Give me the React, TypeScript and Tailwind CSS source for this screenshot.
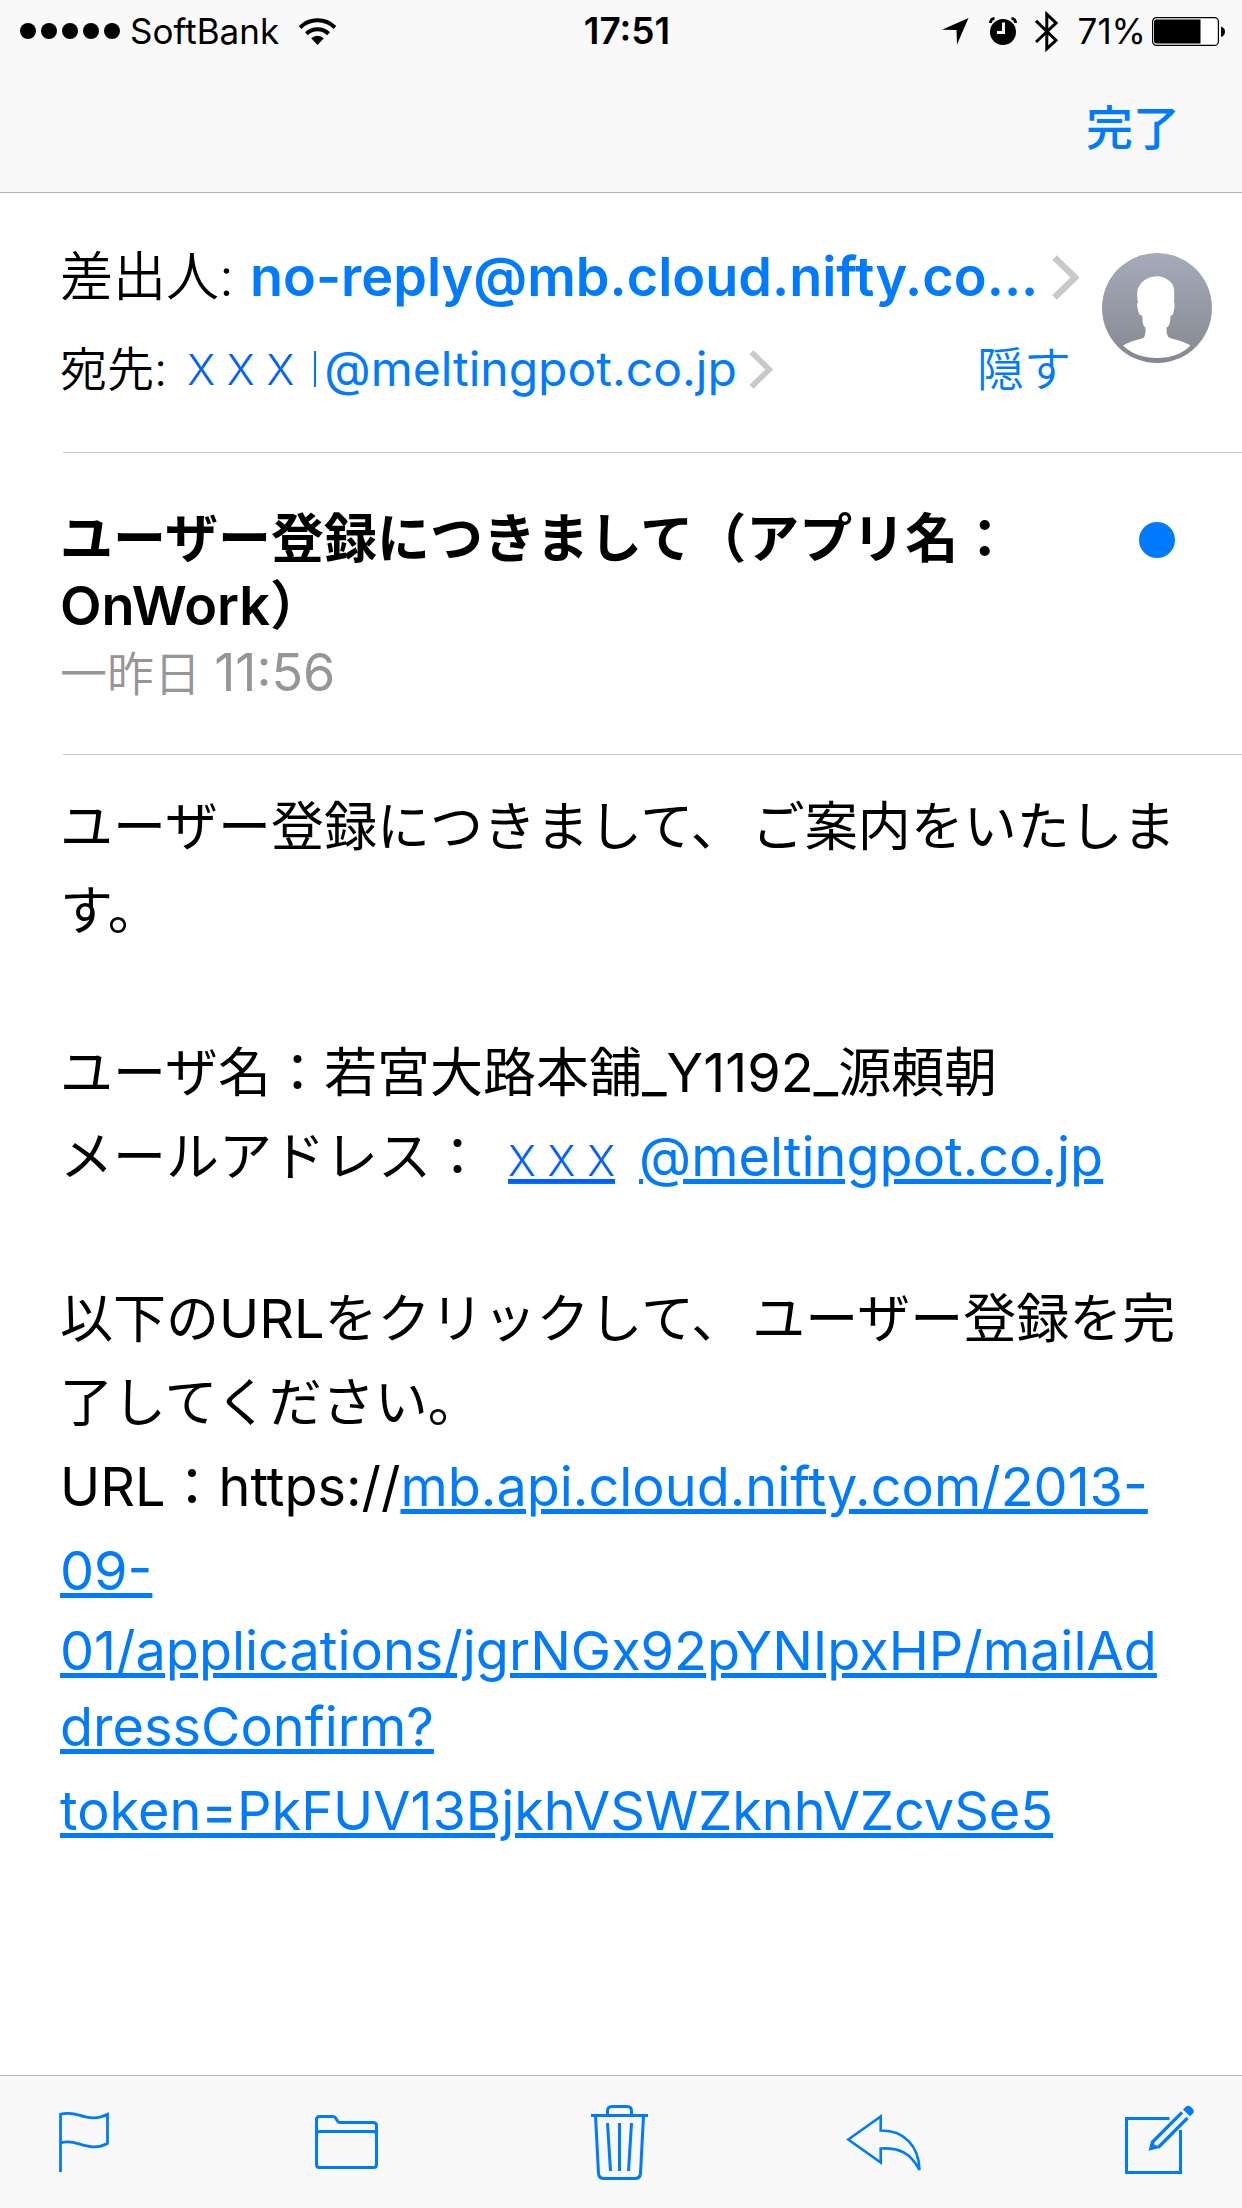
import type { ReactNode } from "react";

// Latin runs are set slightly larger than the Japanese text around them
function Latin({ children }: { children: ReactNode }) {
  return <span className="text-[54px] leading-none">{children}</span>;
}

// Full-width comma with a little extra room after it
function Comma() {
  return <span className="mr-2">、</span>;
}

function WifiIcon() {
  return (
    <svg width="37" height="27" viewBox="0 0 37 27" fill="none" stroke="#000" strokeWidth="4">
      <path d="M1 9.5A25 25 0 0 1 36 9.5" />
      <path d="M7.4 15.8A16 16 0 0 1 29.6 15.8" />
      <path d="M18.5 27L12.2 20.3A9 9 0 0 1 24.8 20.3Z" fill="#000" stroke="none" />
    </svg>
  );
}

function LocationIcon() {
  return (
    <svg width="27" height="27" viewBox="0 0 27 27">
      <path d="M0 11.7L26.5 0L15 26.5L14.5 12Z" />
    </svg>
  );
}

function AlarmIcon() {
  return (
    <svg width="28" height="28" viewBox="0 0 28 28" fill="none">
      <circle cx="14" cy="15" r="13" fill="#000" />
      <path d="M1.5 6C1.5 3.5 3 1.5 5.5 1.5M26.5 6C26.5 3.5 25 1.5 22.5 1.5" stroke="#000" strokeWidth="3" />
      <path d="M14.5 5.5V15.5H8" stroke="#f9f9f9" strokeWidth="3" />
    </svg>
  );
}

function BluetoothIcon() {
  return (
    <svg width="23" height="41" viewBox="0 0 23 41" fill="none" stroke="#000" strokeWidth="3">
      <path d="M1 9.8L21 29.3L11.8 37.8V3.2L21 12L1 31" />
    </svg>
  );
}

function BatteryIcon() {
  return (
    <svg width="74" height="29" viewBox="0 0 74 29">
      <rect x="0.6" y="0.6" width="65.8" height="27.8" rx="4" fill="#fff" stroke="#000" strokeWidth="1.2" />
      <path d="M4.5 2.5H48.5V26.5H4.5A2.5 2.5 0 0 1 2 24V5A2.5 2.5 0 0 1 4.5 2.5Z" />
      <path d="M69 9.5Q73 11 73 14.7Q73 18.5 69 20Z" />
    </svg>
  );
}

function Chevron({ className }: { className: string }) {
  return (
    <svg className={className} viewBox="0 0 27 45" fill="none" stroke="#c9c9c9" strokeWidth="6.5">
      <path d="M2.5 2.5L23 22.5L2.5 42.5" />
    </svg>
  );
}

function Avatar() {
  return (
    <svg width="110" height="110" viewBox="0 0 110 110" className="block">
      <defs>
        <linearGradient id="avatar" x1="0" y1="0" x2="0" y2="1">
          <stop offset="0" stopColor="#a5abb9" />
          <stop offset="1" stopColor="#848891" />
        </linearGradient>
      </defs>
      <circle cx="55" cy="55" r="55" fill="url(#avatar)" />
      <path
        d="M55 23.3C61 23.3 65 26 68.5 29C72 32 73 38 72 49.5C73.5 50 72 58 71 61C70.5 62.5 69.5 62.5 68.5 62.5L68 69C67.5 71.5 66.5 74 64.5 74.5C64.5 79 65 83 67 84.5C71 86.5 82 88 88.5 92.5C80.5 101 68 105 55 105C42 105 29.5 101 21 92.5C28 88 38 86.5 42 84.5C44 80 43.5 78 43.5 74.5C42 74 41 71.5 40.7 69L40.3 62.5C38.5 62.5 37.6 62 37 60.5C36 57 34 50 36 49.5C34.5 40 35 36 38 32C40 28 47 23.3 55 23.3Z"
        fill="#fff"
      />
    </svg>
  );
}

function FlagIcon() {
  return (
    <svg width="50" height="60" viewBox="0 0 50 60" fill="none" stroke="currentColor" strokeWidth="2.8">
      <path d="M1.5 60V2.3C8 0.5 14 1.4 20 3.2C29 6 38 8 48.5 2.3V31.5C38 37 29 34.7 20 31.9C14 30 8 28.7 1.5 31" />
    </svg>
  );
}

function FolderIcon() {
  return (
    <svg width="86" height="54" viewBox="-8 0 86 54" fill="none" stroke="currentColor" strokeWidth="3">
      <path d="M1.5 49.5V4.5Q1.5 1.5 4.5 1.5H18Q20 1.5 21 3.5L22.5 6Q23.5 7.5 25 7.5H58Q61.5 7.5 61.5 11V49.5Q61.5 52.5 58.5 52.5H4.5Q1.5 52.5 1.5 49.5Z" />
      <path d="M1.5 19.5Q1.5 16.5 4.5 16.5H58.5Q61.5 16.5 61.5 19.5" />
    </svg>
  );
}

function TrashIcon() {
  return (
    <svg width="57" height="75" viewBox="0 0 57 75" fill="none" stroke="currentColor" strokeWidth="3">
      <path d="M0 10.5H57M16.5 10.5V6Q16.5 1.5 21 1.5H36Q40.5 1.5 40.5 6V10.5" />
      <path d="M4.5 10.5L7.5 68.5Q8 73.5 13 73.5H44Q49 73.5 49.5 68.5L52.5 10.5" />
      <path d="M16.5 18L19.5 66M28.5 18V66M40.5 18L37.5 66" />
    </svg>
  );
}

function ReplyIcon() {
  return (
    <svg width="81" height="57" viewBox="0 0 81 57" fill="none" stroke="currentColor" strokeWidth="2.6">
      <path d="M2.3 25.5L34.7 2.5V16.5C58 16 73 32 73.5 56C65 40 55 33.5 34.7 34.5V48.5Z" />
    </svg>
  );
}

function ComposeIcon() {
  return (
    <svg width="69" height="75" viewBox="0 0 69 75" fill="none" stroke="currentColor" strokeWidth="3">
      <path d="M44.5 13.5H1.5V67.5H55.5V25" />
      <path d="M27.5 37L57 7.3M33.2 42.5L62.5 13" strokeWidth="3.2" />
      <path d="M23.5 45.8L26.2 35.5L29 37.5L29.5 40L32 40.5L34.5 43Z" fill="currentColor" stroke="none" />
      <path d="M58 4.5L60.5 2Q63 -0.5 66 2L67.5 3.5Q70 6.5 67.5 9L65 11.3Z" fill="currentColor" stroke="none" />
    </svg>
  );
}

const actions = [
  { label: "フラグ", icon: <FlagIcon /> },
  { label: "移動", icon: <FolderIcon /> },
  { label: "削除", icon: <TrashIcon /> },
  { label: "返信", icon: <ReplyIcon /> },
  { label: "作成", icon: <ComposeIcon /> },
];

function StatusBar() {
  return (
    <div className="grid grid-cols-3 items-center h-[62px] pl-5 pr-4 text-[35px]">
      <div className="flex items-center">
        <div className="flex gap-[5px]">
          {[0, 1, 2, 3, 4].map((i) => (
            <span key={i} className="size-4 rounded-full bg-black" />
          ))}
        </div>
        <span className="ml-2.5 mr-5">SoftBank</span>
        <WifiIcon />
      </div>
      <div className="text-center text-[37px] font-semibold pl-2">17:51</div>
      <div className="flex items-center justify-end">
        <LocationIcon />
        <span className="ml-5"><AlarmIcon /></span>
        <span className="ml-[18px]"><BluetoothIcon /></span>
        <span className="ml-5 mr-1.5">71%</span>
        <BatteryIcon />
      </div>
    </div>
  );
}

export default function App() {
  return (
    <div className="min-h-screen flex flex-col bg-white text-black font-['Inter','Noto_Sans_CJK_JP',sans-serif]" lang="ja">
      <header className="bg-[#f9f9f9] border-b border-[#b2b2b2]">
        <StatusBar />
        <div className="flex justify-end items-center h-[130px] pr-[62px]">
          <button className="text-[47px] font-medium leading-none text-[#007aff]">完了</button>
        </div>
      </header>

      <main className="flex-1">
        {/* Sender and recipient */}
        <section className="flex justify-between pl-[60px] pr-[30px] pt-12">
          <div className="flex-1">
            <div className="flex items-center h-[72px] whitespace-nowrap">
              <div className="flex items-baseline">
                <span className="text-[53px] font-[350]">差出人:</span>
                <a href="#sender" className="ml-4 text-[54px] font-semibold text-[#007aff]">no-reply@mb.cloud.nifty.co...</a>
              </div>
              <Chevron className="ml-3.5 w-[27px] h-[45px]" />
            </div>
            <div className="flex items-center h-16 mt-6 text-[47px] whitespace-nowrap">
              <span className="font-[350]">宛先:</span>
              <a href="#recipient" className="flex items-center ml-5 text-[#007aff]">
                <span className="text-[42px] font-light text-[#005fff]">X X X</span>
                <span className="ml-5 mr-2 w-0.5 h-9 bg-[#007aff]" />
                <span className="text-[48px]">@meltingpot.co.jp</span>
              </a>
              <Chevron className="ml-3 w-[24px] h-[39px]" />
              <button className="ml-auto mr-[31px] font-[350] text-[#007aff]">隠す</button>
            </div>
          </div>
          <div className="mt-3">
            <Avatar />
          </div>
        </section>

        {/* Subject */}
        <section className="ml-[63px] mt-[51px] border-y border-[#c8c8c8] flex justify-between pt-[53px] pb-[47px] pr-[67px]">
          <div className="-ml-[3px] leading-[67px]">
            <h1 className="text-[53px] font-semibold">
              ユーザー登録につきまして（アプリ名：
              <br />
              <Latin>OnWork</Latin>）
            </h1>
            <p className="text-[47px] font-[350] text-[#969696]">
              一昨日 <span className="text-[52px] leading-none font-normal">11:56</span>
            </p>
          </div>
          <span className="mt-4 size-9 shrink-0 rounded-full bg-[#007aff]" />
        </section>

        {/* Message body */}
        <article className="px-[60px] pt-[30px] text-[53px] leading-[84px] [&_a]:text-[#007aff] [&_a]:underline">
          <p>ユーザー登録につきまして<Comma />ご案内をいたします。</p>
          <p className="mt-[78px]">
            ユーザ名：若宮大路本舗<Latin>_Y1192_</Latin>源頼朝
            <br />
            メールアドレス：
            <a href="#address" className="ml-6">
              <span className="text-[42px] leading-none font-light text-[#005fff] underline">X X X</span>
            </a>
            <a href="#address" className="ml-6"><Latin>@meltingpot.co.jp</Latin></a>
          </p>
          <p className="mt-[78px]">
            以下の<Latin>URL</Latin>をクリックして<Comma />ユーザー登録を完了してください。
            <br />
            <Latin>URL</Latin>：<Latin>https://</Latin>
            <a href="#confirm">
              <Latin>mb.api.cloud.nifty.com/2013-</Latin>
              <br />
              <Latin>09-</Latin>
            </a>
          </p>
          <p className="leading-[76px]">
            <a href="#confirm">
              <Latin>01/applications/jgrNGx92pYNIpxHP/mailAd</Latin>
              <br />
              <Latin>dressConfirm?</Latin>
            </a>
          </p>
          <p className="mt-1">
            <a href="#confirm"><Latin>token=PkFUV13BjkhVSWZknhVZcvSe5</Latin></a>
          </p>
        </article>
      </main>

      <footer className="flex items-center justify-between h-[133px] pl-[59px] pr-12 bg-[#f9f9f9] border-t border-[#b2b2b2] text-[#007aff]">
        {actions.map((a) => (
          <button key={a.label} aria-label={a.label}>
            {a.icon}
          </button>
        ))}
      </footer>
    </div>
  );
}
